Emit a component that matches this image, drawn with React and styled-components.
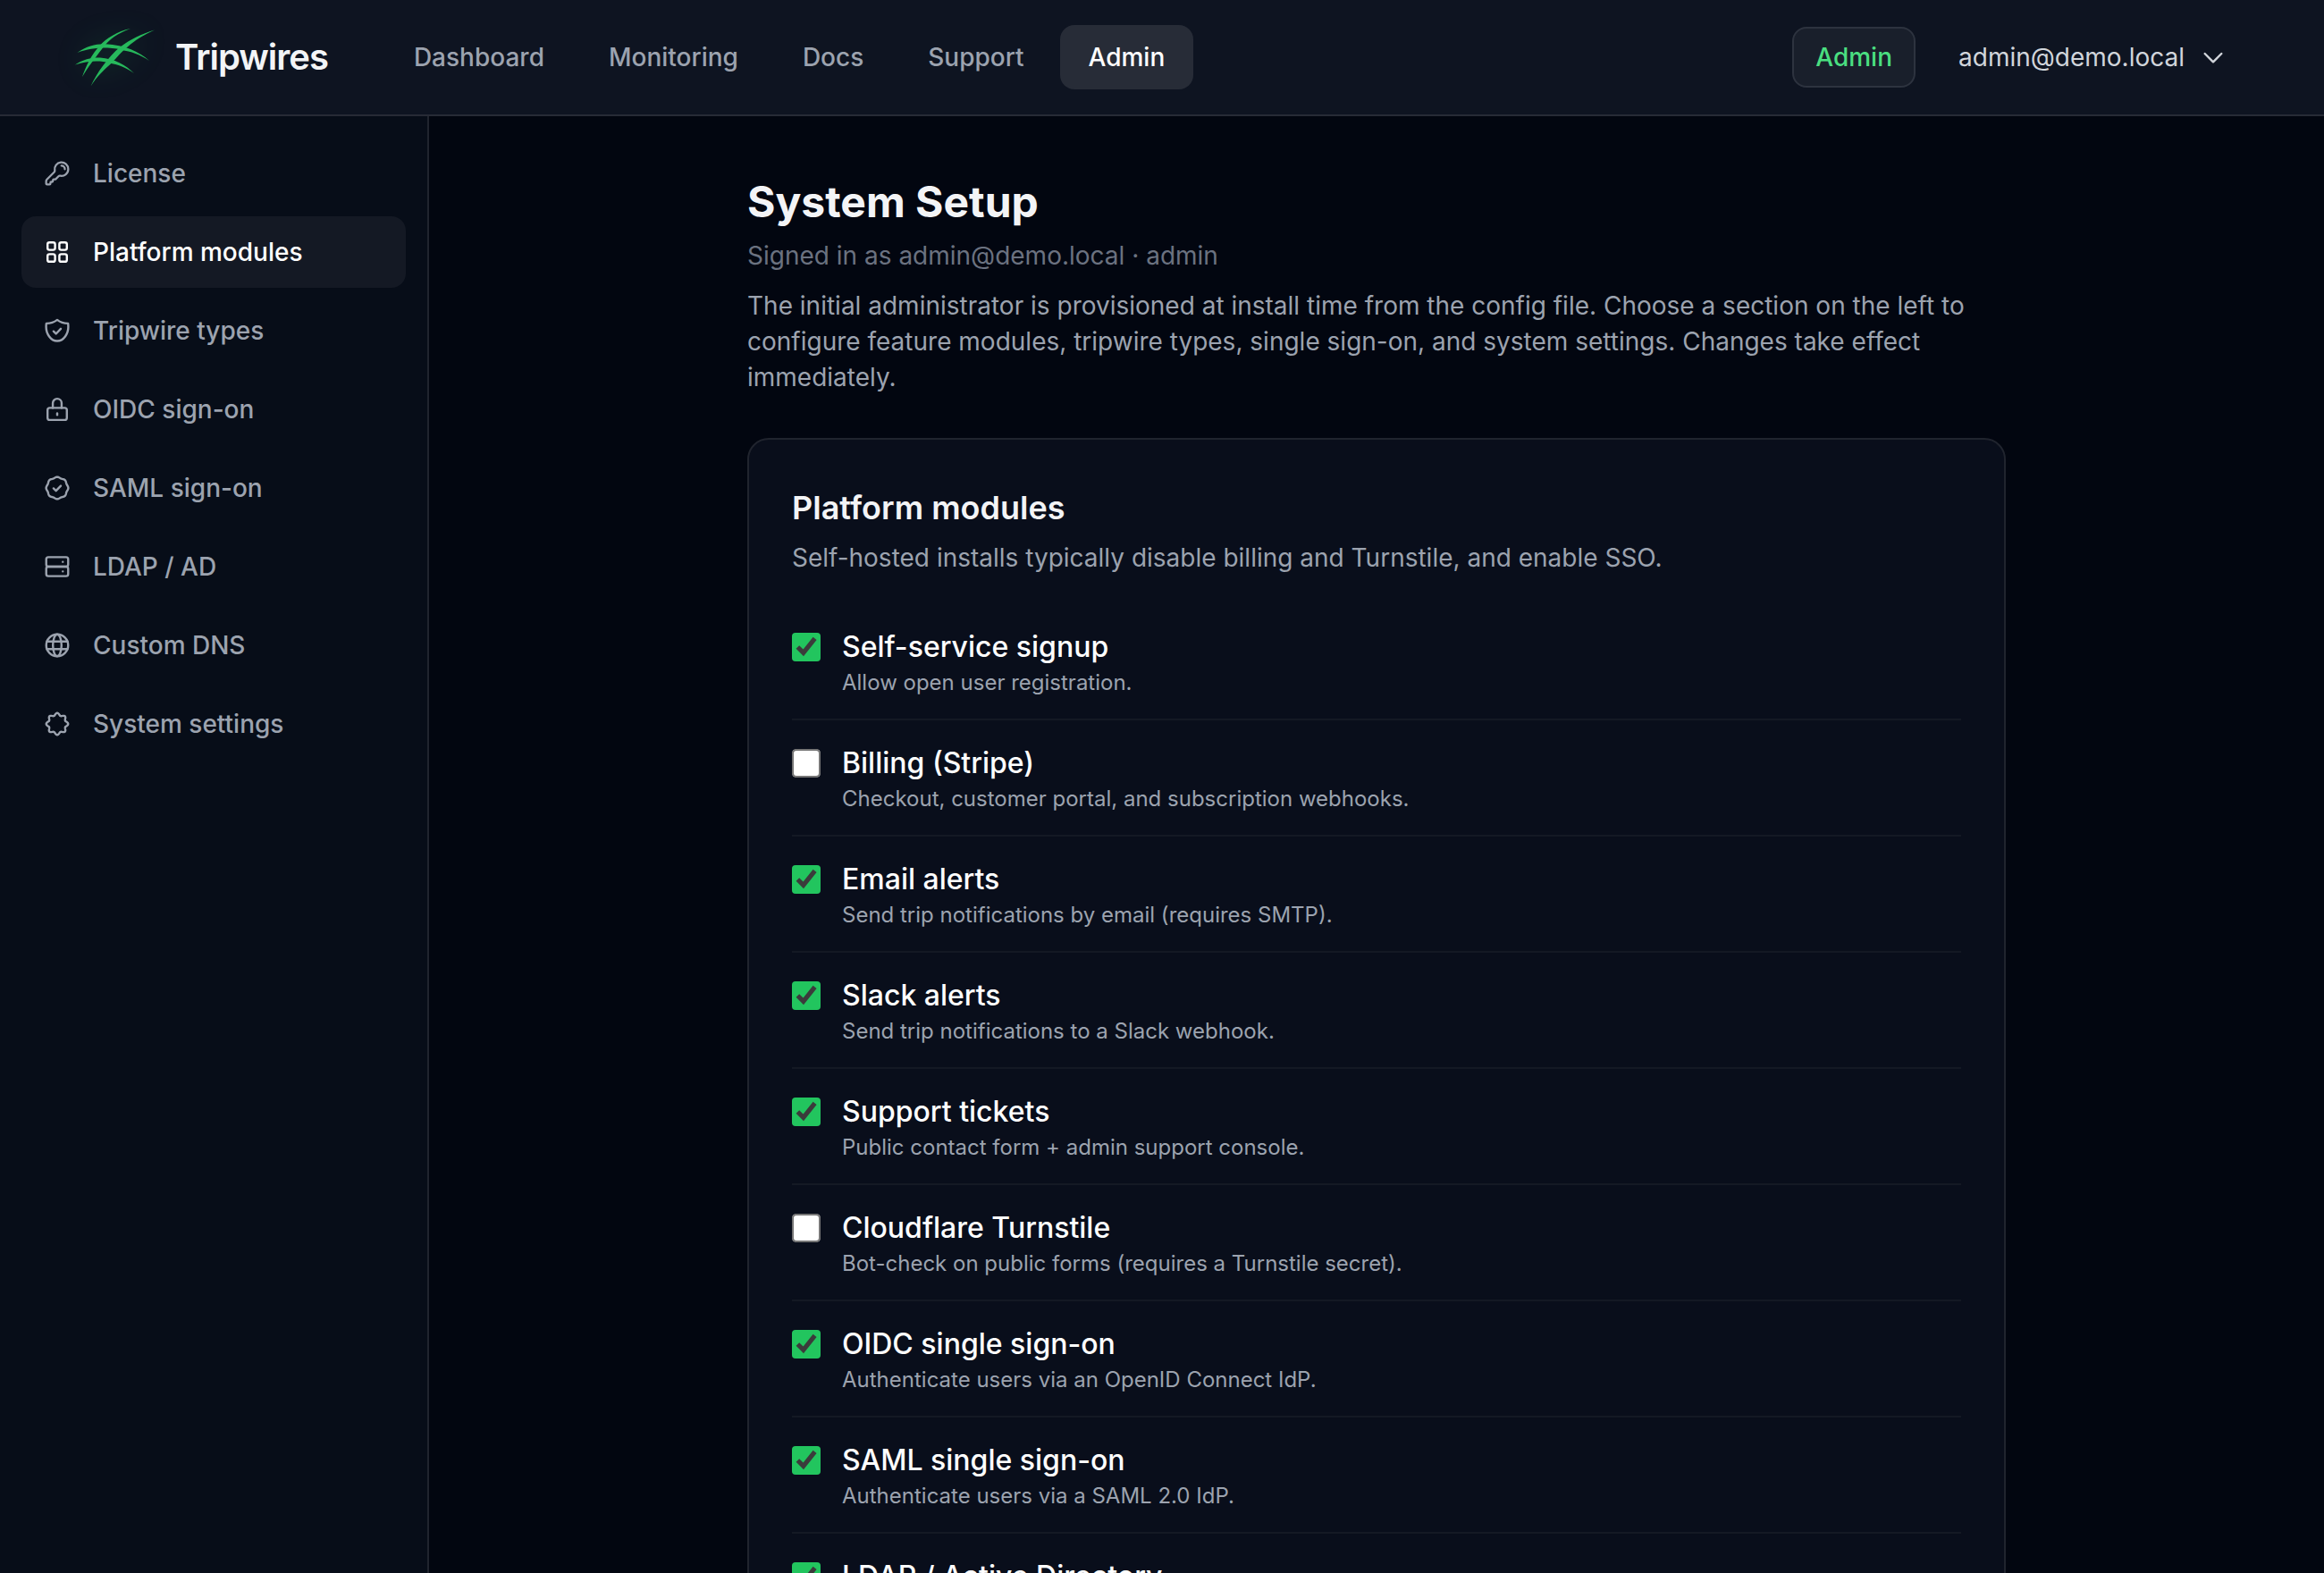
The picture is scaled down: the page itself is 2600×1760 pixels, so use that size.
import React from 'react'
import styled, {createGlobalStyle} from 'styled-components'

const GlobalStyle = createGlobalStyle`
  *,
  *::before,
  *::after {
    box-sizing: border-box;
  }

  html {
    height: 100%;
    background: #020610;
  }

  body {
    margin: 0;
    height: 100%;
    overflow: hidden;
    color: #f3f4f6;
    font-family: Inter, 'Liberation Sans', sans-serif;
    font-size: 28px;
    font-optical-sizing: none;
    line-height: 40px;
  }

  #root {
    height: 100%;
  }
`

const Page = styled.div`
  display: flex;
  flex-direction: column;
  height: 100%;
`

const Header = styled.header`
  display: flex;
  flex: none;
  align-items: center;
  height: 130px;
  padding: 0 108px 0 80px;
  background: #0e1421;
  border-bottom: 2px solid #272b36;
`

const Brand = styled.a`
  display: flex;
  align-items: center;
  gap: 24px;
  color: #f3f4f6;
  font-size: 40px;
  font-weight: 600;
  letter-spacing: -1px;
  text-decoration: none;
`

const LogoSvg = styled.svg`
  width: 92px;
  height: 72px;
  overflow: visible;
  filter: drop-shadow(0 0 16px rgba(34, 197, 94, 0.2));
`

const MainNav = styled.nav`
  display: flex;
  gap: 8px;
  margin-left: 64px;
`

const NavLink = styled.a`
  padding: 16px 32px;
  border-radius: 16px;
  background: ${props => (props.$active ? '#272c37' : 'transparent')};
  color: ${props => (props.$active ? '#ffffff' : '#9ca3af')};
  font-weight: 500;
  text-decoration: none;
`

const Account = styled.div`
  display: flex;
  align-items: center;
  gap: 48px;
  margin-left: auto;
`

const RoleBadge = styled.span`
  padding: 12px 24px;
  border: 2px solid #2d333f;
  border-radius: 16px;
  background: #191f2b;
  color: #4ade80;
  font-weight: 500;
`

const AccountButton = styled.button`
  display: flex;
  align-items: center;
  gap: 16px;
  padding: 0;
  border: 0;
  background: none;
  color: #d1d5db;
  font: inherit;
  cursor: pointer;
`

const Icon = styled.svg`
  flex: none;
  width: 32px;
  height: 32px;
  fill: none;
  stroke: currentColor;
  stroke-width: 1.8;
  stroke-linecap: round;
  stroke-linejoin: round;
`

const Body = styled.div`
  display: flex;
  flex: 1;
  min-height: 0;
`

const Sidebar = styled.nav`
  display: flex;
  flex: none;
  flex-direction: column;
  gap: 8px;
  width: 480px;
  padding: 24px;
  background: #070d18;
  border-right: 2px solid #20242e;
`

const SideLink = styled.a`
  display: flex;
  align-items: center;
  gap: 24px;
  padding: 20px 24px;
  border-radius: 16px;
  background: ${props => (props.$active ? '#141924' : 'transparent')};
  color: ${props => (props.$active ? '#ffffff' : '#9ca3af')};
  font-weight: 500;
  text-decoration: none;
`

const Main = styled.main`
  flex: 1;
  min-width: 0;
  overflow: hidden;
  padding: 64px;
`

const Content = styled.div`
  max-width: 1408px;
  margin: 0 auto;
`

const PageTitle = styled.h1`
  margin: 0;
  font-size: 48px;
  font-weight: 700;
  line-height: 64px;
`

const SignedIn = styled.p`
  margin: 8px 0 0;
  color: #6b7280;
`

const Intro = styled.p`
  margin: 16px 0 0;
  color: #9ca3af;
`

const Card = styled.section`
  margin-top: 48px;
  padding: 48px;
  border: 2px solid #20242e;
  border-radius: 24px;
  background: #090e1b;
`

const CardTitle = styled.h2`
  margin: 0;
  font-size: 36px;
  font-weight: 600;
  line-height: 56px;
`

const CardText = styled.p`
  margin: 8px 0 0;
  color: #9ca3af;
`

const ModuleList = styled.ul`
  margin: 32px 0 0;
  padding: 0;
  list-style: none;
`

const ModuleRow = styled.li`
  padding: 28px 0 20px;

  & + & {
    border-top: 2px solid #141924;
  }
`

const ModuleLabel = styled.label`
  display: flex;
  align-items: flex-start;
  gap: 24px;
  cursor: pointer;
`

/* zoomed so the native border and corners grow with the box */
const Checkbox = styled.input`
  flex: none;
  width: 16px;
  height: 16px;
  margin: 2px 0 0;
  accent-color: #22c55e;
  zoom: 2;
`

const ModuleText = styled.span`
  display: flex;
  flex-direction: column;
`

const ModuleName = styled.span`
  color: #ffffff;
  font-size: 32px;
  font-weight: 500;
`

const ModuleHint = styled.span`
  color: #9ca3af;
  font-size: 24px;
`

// Closed wavy ring with eight bumps, centred in a 24x24 box
const wavyRing = (radius, depth) => {
  const points = []
  for (let deg = 0; deg < 360; deg += 5) {
    const angle = (deg * Math.PI) / 180
    const r = radius + depth * Math.cos(8 * angle)
    points.push(`${(12 + r * Math.cos(angle)).toFixed(2)} ${(12 + r * Math.sin(angle)).toFixed(2)}`)
  }
  return `M${points.join('L')}Z`
}

const icons = {
  key: (
    <g transform='translate(.6 .6) scale(.95)'>
      <path d='M15.75 5.25a3 3 0 0 1 3 3' />
      <path d='M21.75 8.25a6 6 0 0 1-7.03 5.91c-.56-.1-1.16.03-1.56.43L10.5 17.25H9a.75.75 0 0 0-.75.75v.75a.75.75 0 0 1-.75.75h-.75a.75.75 0 0 0-.75.75V21a.75.75 0 0 1-.75.75H3a.75.75 0 0 1-.75-.75v-2.07c0-.6.24-1.17.66-1.59l6.5-6.5c.4-.4.53-1 .43-1.56a6 6 0 1 1 11.91-1.03Z' />
    </g>
  ),
  modules: (
    <>
      <rect x='3.9' y='3.9' width='6.3' height='6.3' rx='1.6' />
      <rect x='13.8' y='3.9' width='6.3' height='6.3' rx='1.6' />
      <rect x='3.9' y='13.8' width='6.3' height='6.3' rx='1.6' />
      <rect x='13.8' y='13.8' width='6.3' height='6.3' rx='1.6' />
    </>
  ),
  shield: (
    <>
      <path d='M12 2.9C9.5 4.9 6.2 5.9 2.9 5.9c-.2 1-.2 2-.2 2.9C2.7 14.5 6.5 20.6 12 20.6s9.3-6.1 9.3-11.8c0-.9 0-1.9-.2-2.9C17.8 5.9 14.5 4.9 12 2.9Z' />
      <path d='m8.9 12.5 2.1 2.1 4-4.2' />
    </>
  ),
  lock: (
    <>
      <path d='M8.3 10.8V6.8a3.7 3.7 0 0 1 7.4 0v4' />
      <rect x='3.9' y='10.8' width='16.2' height='10.1' rx='1.8' />
      <path d='M12 15.4v1.3' />
    </>
  ),
  badge: (
    <>
      <path d={wavyRing(8.9, 0.4)} />
      <path d='m8.9 12.3 2.1 2.1 4-4.2' />
    </>
  ),
  server: (
    <>
      <rect x='2.8' y='4' width='18.4' height='8' rx='1.8' />
      <rect x='2.8' y='12' width='18.4' height='8' rx='1.8' />
      <path d='M16.7 8h.01M16.7 16h.01' />
    </>
  ),
  globe: (
    <>
      <circle cx='12' cy='12' r='9.2' />
      <ellipse cx='12' cy='12' rx='3.6' ry='9.2' />
      <path d='M3.4 8.8h17.2M3.4 15.2h17.2' />
    </>
  ),
  settings: <path d={wavyRing(8.2, 1)} />,
}

const navItems = ['Dashboard', 'Monitoring', 'Docs', 'Support', 'Admin']

const sideItems = [
  {icon: 'key', label: 'License'},
  {icon: 'modules', label: 'Platform modules'},
  {icon: 'shield', label: 'Tripwire types'},
  {icon: 'lock', label: 'OIDC sign-on'},
  {icon: 'badge', label: 'SAML sign-on'},
  {icon: 'server', label: 'LDAP / AD'},
  {icon: 'globe', label: 'Custom DNS'},
  {icon: 'settings', label: 'System settings'},
]

const modules = [
  {name: 'Self-service signup', hint: 'Allow open user registration.', on: true},
  {name: 'Billing (Stripe)', hint: 'Checkout, customer portal, and subscription webhooks.', on: false},
  {name: 'Email alerts', hint: 'Send trip notifications by email (requires SMTP).', on: true},
  {name: 'Slack alerts', hint: 'Send trip notifications to a Slack webhook.', on: true},
  {name: 'Support tickets', hint: 'Public contact form + admin support console.', on: true},
  {name: 'Cloudflare Turnstile', hint: 'Bot-check on public forms (requires a Turnstile secret).', on: false},
  {name: 'OIDC single sign-on', hint: 'Authenticate users via an OpenID Connect IdP.', on: true},
  {name: 'SAML single sign-on', hint: 'Authenticate users via a SAML 2.0 IdP.', on: true},
  {name: 'LDAP / Active Directory', hint: 'Authenticate users against a directory server.', on: true},
]

// Four tapered blades crossing each other
const Logo = () => (
  <LogoSvg viewBox='80 28 92 72' fill='#27b95c' aria-hidden='true'>
    <path d='M146 32C131 35 119 43 111.5 51C102.5 61 96 74 92 86C98 76 104.500 67 115.500 53C122 44 132 37 146 32Z' />
    <path d='M173 33.5C158 38 146 44 134.500 52.500C120.500 64 108 82 101.500 96.500C108 86 116.500 78 126 69.500C135.500 59 147 45 173 33.500Z' />
    <path d='M86.5 59C97 51.500 107 49 118 49.300C140 50.500 156 58 167 68C157 61 146 57.500 136 56C128 53 105 51.500 86.500 59Z' />
    <path d='M84 72.5C93 66.500 102 64.300 112 64.500C128 65.500 141 73 150 82C140 75 132 72 122 70.500C112 67.500 98 68 84 72.500Z' />
  </LogoSvg>
)

const App = () => {
  const [enabled, setEnabled] = React.useState(() => modules.map(item => item.on))

  const toggle = index => setEnabled(enabled.map((on, i) => (i === index ? !on : on)))

  return (
    <>
      <GlobalStyle />
      <Page>
        <Header>
          <Brand href='#'>
            <Logo />
            Tripwires
          </Brand>
          <MainNav aria-label='Main'>
            {navItems.map(item => (
              <NavLink key={item} href='#' $active={item === 'Admin'}>
                {item}
              </NavLink>
            ))}
          </MainNav>
          <Account>
            <RoleBadge>Admin</RoleBadge>
            <AccountButton type='button'>
              admin@demo.local
              <Icon viewBox='0 0 24 24' aria-hidden='true'>
                <path d='m5 9 7 7 7-7' />
              </Icon>
            </AccountButton>
          </Account>
        </Header>
        <Body>
          <Sidebar aria-label='Admin sections'>
            {sideItems.map(({icon, label}) => (
              <SideLink key={label} href='#' $active={icon === 'modules'}>
                <Icon viewBox='0 0 24 24' aria-hidden='true'>
                  {icons[icon]}
                </Icon>
                {label}
              </SideLink>
            ))}
          </Sidebar>
          <Main>
            <Content>
              <PageTitle>System Setup</PageTitle>
              <SignedIn>Signed in as admin@demo.local · admin</SignedIn>
              <Intro>
                The initial administrator is provisioned at install time from the config file. Choose a
                section on the left to configure feature modules, tripwire types, single sign-on, and
                system settings. Changes take effect immediately.
              </Intro>
              <Card>
                <CardTitle>Platform modules</CardTitle>
                <CardText>
                  Self-hosted installs typically disable billing and Turnstile, and enable SSO.
                </CardText>
                <ModuleList>
                  {modules.map(({name, hint}, index) => (
                    <ModuleRow key={name}>
                      <ModuleLabel>
                        <Checkbox
                          type='checkbox'
                          checked={enabled[index]}
                          onChange={() => toggle(index)}
                        />
                        <ModuleText>
                          <ModuleName>{name}</ModuleName>
                          <ModuleHint>{hint}</ModuleHint>
                        </ModuleText>
                      </ModuleLabel>
                    </ModuleRow>
                  ))}
                </ModuleList>
              </Card>
            </Content>
          </Main>
        </Body>
      </Page>
    </>
  )
}

export default App
